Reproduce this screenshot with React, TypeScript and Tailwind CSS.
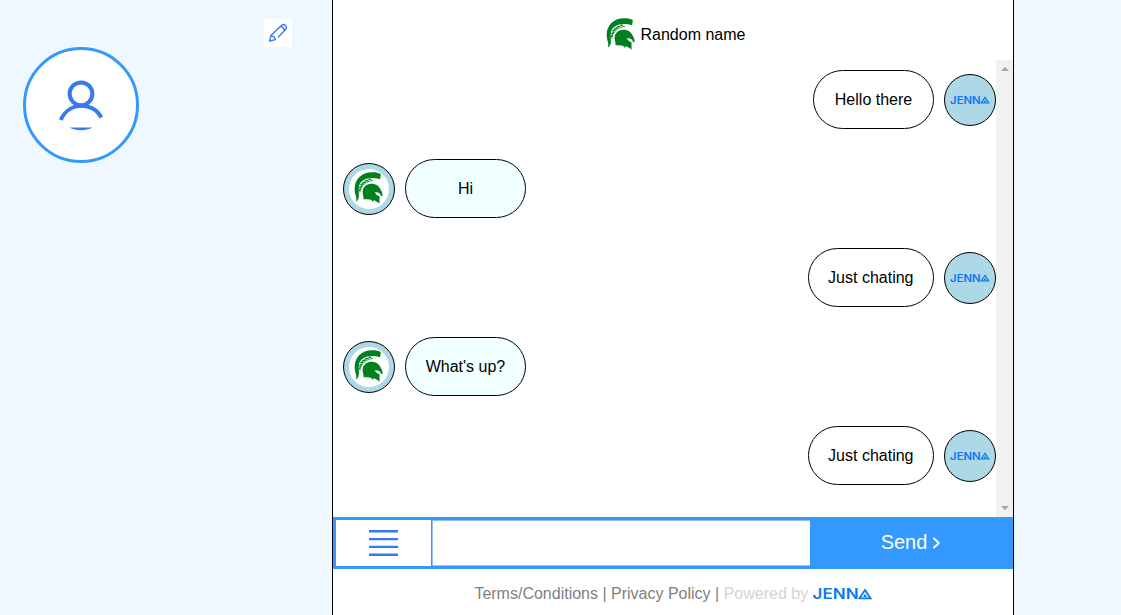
import React from "react";

function Helmet({ className = "" }: { className?: string }) {
  return (
    <svg viewBox="0 0 86 96" className={`h-8 w-[29px] shrink-0 ${className}`} fill="#00801f">
      <path d="M5 88C9 79 4 70 2 59C-2 28 17 0 57 1C65 1 73 3 80 6L78 22C54 15 32 18 20 31C10 44 15 62 14 74C13 82 9 88 5 88Z" />
      <path d="M28 82C30 73 23 65 26 53C31 38 46 34 59 36C72 38 78 49 81 56C84 60 86 66 85 73L80 71C79 64 73 60 62 61C64 67 69 71 76 73L76 95C71 91 65 87 59 85L55 89L51 83L38 82Z" />
      <path d="M14 57L20 50M15 48L24 42M19 39L29 34M25 33L35 29M33 26L43 26M43 21L51 23" stroke="#00801f" strokeWidth="4.2" />
      <path d="M17 62C20 40 34 29 57 25" fill="none" stroke="#00801f" strokeWidth="2.2" />
    </svg>
  );
}

function JennaLogo({ className }: { className: string }) {
  return (
    <svg viewBox="0 0 59 12" className={`overflow-visible ${className}`} role="img" aria-label="JENNA">
      <text x="-0.4" y="11.3" textLength="46" lengthAdjust="spacingAndGlyphs" fill="#0b78f5" fontFamily="Inter, sans-serif" fontWeight="600" fontSize="14.6">
        JENN
      </text>
      <path d="M52 2L57.6 10.4H46.4Z" fill="none" stroke="#0b78f5" strokeWidth="1.8" />
      <path d="M52 5.8L54 9H50Z" fill="#0b78f5" />
    </svg>
  );
}

function Bubble({ text, mine }: { text: string; mine: boolean }) {
  return (
    <div className={`flex h-[59px] items-center gap-2.5 ${mine ? "justify-end" : "pl-2.5"}`}>
      {!mine && (
        <div className="flex size-[52px] items-center justify-center rounded-full border border-black bg-[#add8e6]">
          <div className="flex size-10 items-center justify-center rounded-full bg-white pr-[2px] pb-[2px]">
            <Helmet />
          </div>
        </div>
      )}
      <div className={`flex h-[59px] min-w-[121px] items-center justify-center rounded-[30px] border border-black px-[19.5px] ${mine ? "bg-white" : "bg-[#f0ffff]"}`}>
        {text}
      </div>
      {mine && (
        <div className="flex size-[52px] items-center justify-center rounded-full border border-black bg-[#add8e6]">
          <JennaLogo className="h-2 w-10" />
        </div>
      )}
    </div>
  );
}

const messages = [
  { text: "Hello there", mine: true },
  { text: "Hi", mine: false },
  { text: "Just chating", mine: true },
  { text: "What's up?", mine: false },
  { text: "Just chating", mine: true },
];

export default function App() {
  return (
    <div className="flex h-[615px] w-[1121px] overflow-hidden bg-[#f0f8ff] font-['Liberation_Sans',Arial,sans-serif] text-base text-black">
      <aside className="flex w-[332px] shrink-0 items-start justify-between pl-[23px] pr-10 pt-[19px]">
        <button className="mt-7 flex size-[116px] items-center justify-center rounded-full border-[3px] border-[#3399ff] bg-white">
          <svg viewBox="0 0 44 51" className="h-[51px] w-11" fill="none" stroke="#3878f0" strokeWidth="4">
            <circle cx="22" cy="13.8" r="11.4" />
            <path d="M1.8 40C9.5 21.5 34.5 21.5 42.2 37.6" />
            <path d="M10.5 47.5H33.5C27 51 17 51 10.5 47.5Z" fill="#3878f0" stroke="none" />
          </svg>
        </button>
        <button className="flex size-7 items-center justify-center bg-white">
          <svg viewBox="0 0 20 20" className="size-5" fill="none" stroke="#3878f0" strokeWidth="1.35" strokeLinejoin="round" strokeLinecap="round">
            <path d="M1.6 18.2L2.9 12.6L13.7 2.2C16.5 .2 19.7 3.6 17.8 6.2L10.3 14M1.6 18.2L7.4 16.6L6.3 13.8L2.9 12.6M12.7 3.3C14.8 3.8 16 5 16.4 7.3" />
          </svg>
        </button>
      </aside>

      <main className="flex w-[682px] shrink-0 flex-col border-x border-black bg-white">
        <header className="flex h-[60px] shrink-0 items-center justify-center gap-[6px] pt-2 pl-[5px]">
          <Helmet className="-mt-[1px]" />
          <span className="pt-0.5">Random name</span>
        </header>

        <section className="flex h-[457px] shrink-0">
          <div className="flex flex-1 flex-col gap-[30px] pt-2.5">
            {messages.map((message, index) => (
              <Bubble key={index} {...message} />
            ))}
          </div>
          <div className="flex w-[17px] flex-col items-center justify-between bg-[#f1f1f1] py-[7px]">
            <svg viewBox="0 0 8 4" className="h-1 w-2" fill="#a3a3a3"><path d="M0 4L4 0L8 4Z" /></svg>
            <svg viewBox="0 0 8 4" className="h-1 w-2" fill="#a3a3a3"><path d="M0 0H8L4 4Z" /></svg>
          </div>
        </section>

        <form className="flex h-[52px] shrink-0 border-[3px] border-[#3399ff] bg-[#3399ff]" onSubmit={(event) => event.preventDefault()}>
          <button type="button" aria-label="Menu" className="flex w-[95px] items-center justify-center bg-white">
            <svg viewBox="0 0 29 26" className="h-[26px] w-[29px]" stroke="#3878f0" strokeWidth="2.4">
              <path d="M0 1.3H29M0 9.1H29M0 16.9H29M0 24.7H29" />
            </svg>
          </button>
          <input aria-label="Message" className="ml-px w-[378px] border border-r-0 border-[#99bbff] bg-white px-2 outline-none" />
          <button type="submit" className="flex flex-1 items-center justify-center gap-[5px] pb-0.5 pl-px text-xl text-white">
            <span>Send</span>
            <svg viewBox="0 0 8 12" className="mt-0.5 h-3 w-2" fill="none" stroke="white" strokeWidth="1.9">
              <path d="M1.5 1L6.8 6L1.5 11" />
            </svg>
          </button>
        </form>

        <footer className="flex flex-1 items-center justify-center pt-[3px] text-[#808080]">
          <span className="whitespace-pre">Terms/Conditions | Privacy Policy | <span className="text-[#d3d3d3]">Powered by </span></span>
          <JennaLogo className="h-3 w-[59px]" />
        </footer>
      </main>
    </div>
  );
}
